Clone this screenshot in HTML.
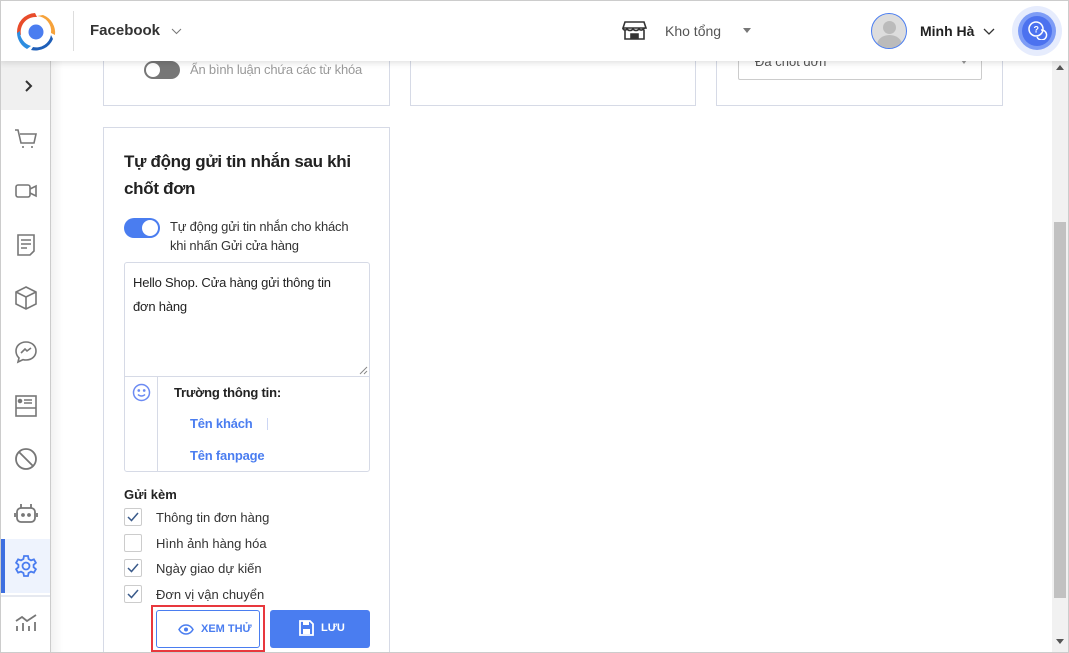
<!DOCTYPE html>
<html><head><meta charset="utf-8"><style>
*{box-sizing:border-box;margin:0;padding:0}
html,body{width:1069px;height:653px;overflow:hidden}
body{background:#fff;font-family:"Liberation Sans","Noto Sans CJK SC",sans-serif;color:#222;position:relative;font-size:13px}
.frame{position:absolute;left:0;top:0;width:1069px;height:653px;border:1px solid #ccc;pointer-events:none;z-index:50}
.top{position:absolute;left:0;top:0;width:1069px;height:61px;background:#fff;box-shadow:0 2px 6px rgba(0,0,0,.12);z-index:10}
.side{position:absolute;left:0;top:61px;width:51px;height:592px;background:#fff;border-right:1px solid #ccc;z-index:5}
.side .ic{position:absolute;left:14px;width:24px;height:24px}
.card{position:absolute;border:1px solid #d6dae6;background:#fff}
.sb{position:absolute;left:1052px;top:61px;width:16px;height:591px;background:#f1f1f1}
.cb{position:absolute;left:124px;width:18px;height:18px;border:1px solid #ccc;border-radius:2px}
.lbl{position:absolute;left:156px;font-size:13px;color:#333}
</style></head><body>
<div class="frame"></div>
<div class="top">
  <svg style="position:absolute;left:15px;top:11px" width="42" height="40" viewBox="0 0 42 40">
    <path d="M6 24 A15 15 0 0 1 22 6 L20 2 A19 19 0 0 0 2 22 Z" fill="#e84c2b"/>
    <path d="M22 5 A15 15 0 0 1 36 22 L40 24 A19 19 0 0 0 28 4 Z" fill="#f6a23a"/>
    <path d="M36 24 A15 15 0 0 1 18 36 L16 39 A19 19 0 0 0 38 28 Z" fill="#1f5fb8"/>
    <path d="M5 20 A15 15 0 0 0 16 35 L12 38 A19 19 0 0 1 2 22 Z" fill="#2d8de0"/>
    <circle cx="21" cy="21" r="10" fill="#fff"/>
    <circle cx="21" cy="21" r="7.5" fill="#4a7df0"/>
  </svg>
  <div style="position:absolute;left:73px;top:11px;width:1px;height:40px;background:#ddd"></div>
  <div style="position:absolute;left:90px;top:22px;font-size:15px;font-weight:bold;color:#333">Facebook</div>
  <svg style="position:absolute;left:171px;top:28px" width="11" height="7"><path d="M1 1l4.5 4.5L10 1" stroke="#777" fill="none"/></svg>
  <svg style="position:absolute;left:622px;top:21px" width="25" height="19" viewBox="0 0 25 19"><path d="M3 1h19l2 6H1z M1 7c0 2 2.5 3 4 1c1.5 2 4.5 2 6 0c1.5 2 4.5 2 6 0c1.5 2 4 1 6 -1 M3 9v9h19V9 M9 18v-5h7v5" stroke="#333" stroke-width="1.6" fill="none"/><rect x="9" y="13" width="7" height="5" fill="#333"/></svg>
  <div style="position:absolute;left:665px;top:23px;font-size:14px;color:#555">Kho tổng</div>
  <div style="position:absolute;left:743px;top:28px;border-left:4px solid transparent;border-right:4px solid transparent;border-top:5px solid #777"></div>
  <div style="position:absolute;left:871px;top:13px;width:36px;height:36px;border-radius:50%;border:1px solid #4a7df0;background:#ddd;overflow:hidden">
    <div style="position:absolute;left:11px;top:7px;width:13px;height:13px;border-radius:50%;background:#bbb"></div>
    <div style="position:absolute;left:5px;top:21px;width:25px;height:20px;border-radius:50%;background:#bbb"></div>
  </div>
  <div style="position:absolute;left:920px;top:23px;font-size:14px;font-weight:bold;color:#222">Minh Hà</div>
  <svg style="position:absolute;left:983px;top:28px" width="12" height="7"><path d="M1 1l5 5 5-5" stroke="#333" fill="none" stroke-width="1.3"/></svg>
  <div style="position:absolute;left:1012px;top:6px;width:50px;height:50px;border-radius:50%;background:#e6ecfd"></div>
  <div style="position:absolute;left:1018px;top:12px;width:38px;height:38px;border-radius:50%;background:#7d9cf6"></div>
  <div style="position:absolute;left:1022px;top:16px;width:30px;height:30px;border-radius:50%;background:#4c72ef"></div>
  <svg style="position:absolute;left:1028px;top:21px" width="20" height="19" viewBox="0 0 20 19"><circle cx="8" cy="8" r="7" fill="none" stroke="#fff" stroke-width="1.5"/><path d="M13 9a5 5 0 1 1 -4 7" fill="none" stroke="#fff" stroke-width="1.5"/><text x="5.5" y="11.5" font-size="9" fill="#fff" font-family="Liberation Sans" font-weight="bold">?</text></svg>
</div>
<div class="side">
  <div style="position:absolute;left:0;top:0;width:50px;height:49px;background:#f0f0f0"></div>
  <svg style="position:absolute;left:25px;top:19px" width="8" height="12"><path d="M1 1l5 5-5 5" stroke="#333" stroke-width="2" fill="none"/></svg>
  <svg class="ic" style="top:66px" viewBox="0 0 24 24" fill="none" stroke="#777" stroke-width="1.6"><path d="M1 3h3l3 13h13l2-9H6M9 21v-2M18 21v-2"/></svg>
  <svg class="ic" style="top:118px" viewBox="0 0 24 24" fill="none" stroke="#777" stroke-width="1.6"><rect x="2" y="6" width="14" height="12" rx="2"/><path d="M16 10l6-3v10l-6-3"/></svg>
  <svg class="ic" style="top:172px" viewBox="0 0 24 24" fill="none" stroke="#777" stroke-width="1.6"><path d="M4 2h16v16l-4 4H4z M7 7h10M7 11h10M7 15h6"/></svg>
  <svg class="ic" style="top:225px" viewBox="0 0 24 24" fill="none" stroke="#777" stroke-width="1.6"><path d="M12 1l10 5v12l-10 5-10-5V6z M2 6l10 5 10-5M12 11v12"/></svg>
  <svg class="ic" style="top:279px" viewBox="0 0 24 24" fill="none" stroke="#777" stroke-width="1.6"><path d="M12 2c6 0 10 4 10 9s-4 9-10 9c-1 0-2 0-3-.4L4 22l1-4c-2-2-3-4-3-7 0-5 4-9 10-9z M7 13l4-4 2 2 4-3"/></svg>
  <svg class="ic" style="top:333px" viewBox="0 0 24 24" fill="none" stroke="#777" stroke-width="1.6"><rect x="2" y="2" width="20" height="20"/><path d="M2 14h20M10 6h8M10 9h8"/><circle cx="6" cy="7" r="1.5" fill="#777"/></svg>
  <svg class="ic" style="top:386px" viewBox="0 0 24 24" fill="none" stroke="#777" stroke-width="1.8"><circle cx="12" cy="12" r="10"/><path d="M5 5l14 14"/></svg>
  <svg class="ic" style="top:440px" viewBox="0 0 24 24" fill="none" stroke="#777" stroke-width="1.8"><rect x="3" y="7" width="18" height="14" rx="4"/><path d="M7 7V3M17 7V3M1 12v4M23 12v4"/><circle cx="9" cy="14" r="1" fill="#777"/><circle cx="15" cy="14" r="1" fill="#777"/></svg>
  <div style="position:absolute;left:0;top:478px;width:50px;height:54px;background:#eef3fd"></div>
  <div style="position:absolute;left:1px;top:478px;width:4px;height:54px;background:#3d6fe0"></div>
  <svg class="ic" style="top:493px" viewBox="0 0 24 24" fill="none" stroke="#4a7df0" stroke-width="1.8"><circle cx="12" cy="12" r="3.5"/><path d="M10 2h4l.6 3 2.4 1.4 2.9-1 2 3.4-2.3 2v2.4l2.3 2-2 3.4-2.9-1L14.6 19 14 22h-4l-.6-3L7 17.6l-2.9 1-2-3.4 2.3-2v-2.4l-2.3-2 2-3.4 2.9 1L9.4 5z"/></svg>
  <div style="position:absolute;left:0;top:534px;width:50px;height:2px;background:#e6e9f0"></div>
  <svg class="ic" style="top:548px" viewBox="0 0 24 24" fill="none" stroke="#777" stroke-width="1.8"><path d="M2 12l6-4 5 4 9-6M3 22v-5M9 22v-8M15 22v-5M21 22v-9"/></svg>
</div>
<div style="position:absolute;left:51px;top:61px;width:12px;height:592px;background:linear-gradient(90deg,rgba(0,0,0,.05),rgba(0,0,0,0))"></div>

<div class="card" style="left:103px;top:40px;width:287px;height:66px">
  <div style="position:absolute;left:40px;top:20px;width:36px;height:18px;border-radius:9px;background:#777"></div>
  <div style="position:absolute;left:42px;top:22px;width:14px;height:14px;border-radius:50%;background:#fff"></div>
  <div style="position:absolute;left:86px;top:21px;font-size:13px;color:#999;letter-spacing:-0.2px">Ẩn bình luận chứa các từ khóa</div>
</div>
<div class="card" style="left:410px;top:40px;width:286px;height:66px"></div>
<div class="card" style="left:716px;top:40px;width:287px;height:66px">
  <div style="position:absolute;left:21px;top:0;width:244px;height:39px;border:1px solid #ccc;border-radius:2px">
    <div style="position:absolute;left:16px;top:12px;font-size:13px;color:#555">Đã chốt đơn</div>
    <div style="position:absolute;left:222px;top:18px;border-left:3px solid transparent;border-right:3px solid transparent;border-top:4px solid #999"></div>
  </div>
</div>

<div class="card" style="left:103px;top:127px;width:287px;height:530px">
  <div style="position:absolute;left:20px;top:20px;font-size:17px;letter-spacing:-0.3px;font-weight:bold;line-height:27px;color:#222;width:240px">Tự động gửi tin nhắn sau khi chốt đơn</div>
  <div style="position:absolute;left:20px;top:90px;width:36px;height:20px;border-radius:10px;background:#4a7df0"></div>
  <div style="position:absolute;left:38px;top:92px;width:16px;height:16px;border-radius:50%;background:#fff"></div>
  <div style="position:absolute;left:66px;top:89px;font-size:13px;letter-spacing:-0.2px;line-height:19px;color:#333">Tự động gửi tin nhắn cho khách<br>khi nhấn Gửi cửa hàng</div>
  <div style="position:absolute;left:20px;top:134px;width:246px;height:210px;border:1px solid #d6dae6;border-radius:3px">
    <div style="position:absolute;left:8px;top:8px;font-size:13px;letter-spacing:-0.2px;line-height:24px;color:#222;width:215px">Hello Shop. Cửa hàng gửi thông tin đơn hàng</div>
    <svg style="position:absolute;left:233px;top:102px" width="10" height="10"><path d="M9 2L2 9M9 6L6 9" stroke="#888"/></svg>
    <div style="position:absolute;left:0;top:113px;width:244px;height:1px;background:#d6dae6"></div>
    <div style="position:absolute;left:32px;top:113px;width:1px;height:95px;background:#d6dae6"></div>
    <svg style="position:absolute;left:7px;top:120px" width="19" height="19" viewBox="0 0 19 19" fill="none" stroke="#6b8af3" stroke-width="1.5"><circle cx="9.5" cy="9.5" r="8"/><path d="M6 11.5c2 2 5 2 7 0"/><circle cx="6.8" cy="7.5" r=".6" fill="#6b8af3"/><circle cx="12.2" cy="7.5" r=".6" fill="#6b8af3"/></svg>
    <div style="position:absolute;left:49px;top:122px;font-size:13px;font-weight:bold;color:#222;letter-spacing:-0.2px">Trường thông tin:</div>
    <div style="position:absolute;left:65px;top:153px;font-size:13px;font-weight:bold;color:#4a7df0;letter-spacing:-0.2px">Tên khách</div>
    <div style="position:absolute;left:142px;top:155px;width:1px;height:12px;background:#ccd6f4"></div>
    <div style="position:absolute;left:65px;top:185px;font-size:13px;font-weight:bold;color:#4a7df0;letter-spacing:-0.2px">Tên fanpage</div>
  </div>
  <div style="position:absolute;left:20px;top:359px;font-size:13px;font-weight:bold;color:#222">Gửi kèm</div>
</div>
<div class="cb" style="top:508px"><svg width="16" height="16"><path d="M3 8l3.5 3.5L13 4" stroke="#3a5a8a" stroke-width="1.5" fill="none"/></svg></div>
<div class="lbl" style="top:510px">Thông tin đơn hàng</div>
<div class="cb" style="top:534px"></div>
<div class="lbl" style="top:536px">Hình ảnh hàng hóa</div>
<div class="cb" style="top:559px"><svg width="16" height="16"><path d="M3 8l3.5 3.5L13 4" stroke="#3a5a8a" stroke-width="1.5" fill="none"/></svg></div>
<div class="lbl" style="top:561px">Ngày giao dự kiến</div>
<div class="cb" style="top:585px"><svg width="16" height="16"><path d="M3 8l3.5 3.5L13 4" stroke="#3a5a8a" stroke-width="1.5" fill="none"/></svg></div>
<div class="lbl" style="top:587px">Đơn vị vận chuyển</div>

<div style="position:absolute;left:151px;top:605px;width:114px;height:47px;border:2px solid #e8383d"></div>
<div style="position:absolute;left:156px;top:610px;width:104px;height:38px;border:1px solid #4a7df0;border-radius:3px;background:#fff">
  <svg style="position:absolute;left:21px;top:13px" width="16" height="11" viewBox="0 0 16 11"><path d="M1 5.5C3 2 5.5 1 8 1s5 1 7 4.5C13 9 10.5 10 8 10S3 9 1 5.5z" fill="none" stroke="#4a7df0" stroke-width="1.5"/><circle cx="8" cy="5.5" r="2" fill="#4a7df0"/></svg>
  <div style="position:absolute;left:44px;top:12px;font-size:11px;font-weight:bold;color:#4a7df0">XEM THỬ</div>
</div>
<div style="position:absolute;left:270px;top:610px;width:100px;height:38px;border-radius:3px;background:#4a7df0">
  <svg style="position:absolute;left:29px;top:10px" width="15" height="16" viewBox="0 0 15 16"><path d="M1 1h10l3 3v11H1z" fill="none" stroke="#fff" stroke-width="1.8"/><rect x="4" y="1" width="6" height="4" fill="#fff"/><rect x="4" y="9" width="7" height="5" fill="#fff"/></svg>
  <div style="position:absolute;left:51px;top:12px;font-size:11px;font-weight:bold;color:#fff">LƯU</div>
</div>

<div class="sb">
  <div style="position:absolute;left:2px;top:161px;width:12px;height:376px;background:#c1c1c1"></div>
  <div style="position:absolute;left:4px;top:4px;border-left:4px solid transparent;border-right:4px solid transparent;border-bottom:5px solid #555"></div>
  <div style="position:absolute;left:4px;top:578px;border-left:4px solid transparent;border-right:4px solid transparent;border-top:5px solid #555"></div>
</div>
</body></html>
